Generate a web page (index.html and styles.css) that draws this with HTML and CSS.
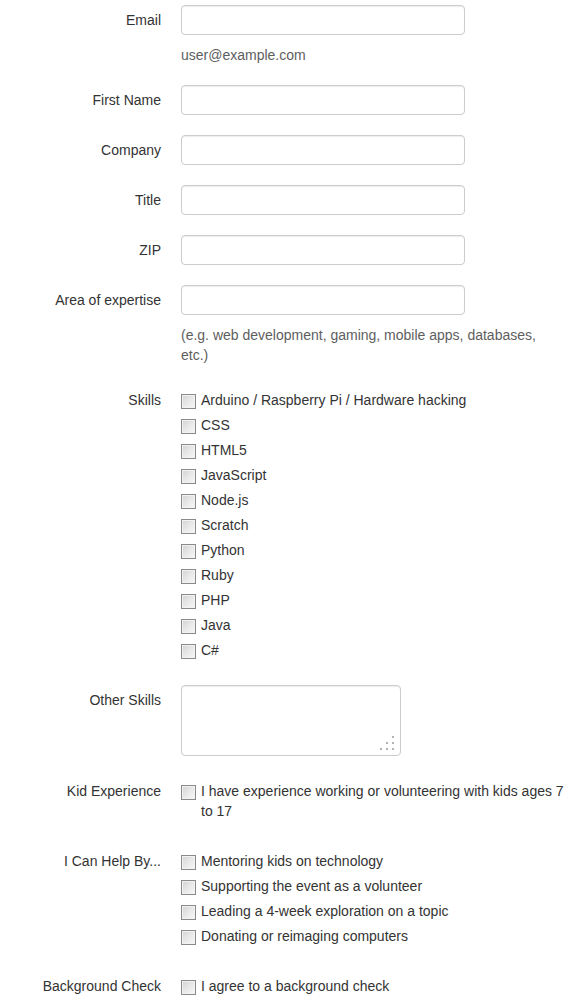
FILE: index.html
```html
<!DOCTYPE html>
<html lang="en">
<head>
<meta charset="utf-8">
<title>Volunteer form</title>
<link rel="stylesheet" href="styles.css">
</head>
<body>
<form class="form">
  <div class="row">
    <label class="label">Email</label>
    <div class="controls">
      <input class="input" type="text">
      <p class="help">user@example.com</p>
    </div>
  </div>
  <div class="row">
    <label class="label">First Name</label>
    <div class="controls"><input class="input" type="text"></div>
  </div>
  <div class="row">
    <label class="label">Company</label>
    <div class="controls"><input class="input" type="text"></div>
  </div>
  <div class="row">
    <label class="label">Title</label>
    <div class="controls"><input class="input" type="text"></div>
  </div>
  <div class="row">
    <label class="label">ZIP</label>
    <div class="controls"><input class="input" type="text"></div>
  </div>
  <div class="row">
    <label class="label">Area of expertise</label>
    <div class="controls">
      <input class="input" type="text">
      <p class="help">(e.g. web development, gaming, mobile apps, databases, etc.)</p>
    </div>
  </div>
  <div class="row">
    <label class="label">Skills</label>
    <div class="controls checks">
      <label class="check"><input type="checkbox" class="cb"><span>Arduino / Raspberry Pi / Hardware hacking</span></label>
      <label class="check"><input type="checkbox" class="cb"><span>CSS</span></label>
      <label class="check"><input type="checkbox" class="cb"><span>HTML5</span></label>
      <label class="check"><input type="checkbox" class="cb"><span>JavaScript</span></label>
      <label class="check"><input type="checkbox" class="cb"><span>Node.js</span></label>
      <label class="check"><input type="checkbox" class="cb"><span>Scratch</span></label>
      <label class="check"><input type="checkbox" class="cb"><span>Python</span></label>
      <label class="check"><input type="checkbox" class="cb"><span>Ruby</span></label>
      <label class="check"><input type="checkbox" class="cb"><span>PHP</span></label>
      <label class="check"><input type="checkbox" class="cb"><span>Java</span></label>
      <label class="check"><input type="checkbox" class="cb"><span>C#</span></label>
    </div>
  </div>
  <div class="row">
    <label class="label">Other Skills</label>
    <div class="controls">
      <div class="ta-wrap">
        <textarea class="textarea"></textarea>
        <svg class="grip" width="14" height="14" viewBox="0 0 14 14" aria-hidden="true">
          <rect x="12" y="0" width="2" height="2" fill="#b3b3b3"/>
          <rect x="6" y="6" width="2" height="2" fill="#b3b3b3"/>
          <rect x="12" y="6" width="2" height="2" fill="#b3b3b3"/>
          <rect x="0" y="12" width="2" height="2" fill="#b3b3b3"/>
          <rect x="6" y="12" width="2" height="2" fill="#b3b3b3"/>
          <rect x="12" y="12" width="2" height="2" fill="#b3b3b3"/>
        </svg>
      </div>
    </div>
  </div>
  <div class="row">
    <label class="label">Kid Experience</label>
    <div class="controls checks">
      <label class="check"><input type="checkbox" class="cb"><span>I have experience working or volunteering with kids ages 7 to 17</span></label>
    </div>
  </div>
  <div class="row">
    <label class="label">I Can Help By...</label>
    <div class="controls checks">
      <label class="check"><input type="checkbox" class="cb"><span>Mentoring kids on technology</span></label>
      <label class="check"><input type="checkbox" class="cb"><span>Supporting the event as a volunteer</span></label>
      <label class="check"><input type="checkbox" class="cb"><span>Leading a 4-week exploration on a topic</span></label>
      <label class="check"><input type="checkbox" class="cb"><span>Donating or reimaging computers</span></label>
    </div>
  </div>
  <div class="row">
    <label class="label">Background Check</label>
    <div class="controls checks">
      <label class="check"><input type="checkbox" class="cb"><span>I agree to a background check</span></label>
    </div>
  </div>
</form>
</body>
</html>
```

FILE: styles.css
```css
html, body {
  margin: 0;
  padding: 0;
  background: #fff;
}

body {
  font-family: "Liberation Sans", Arial, sans-serif;
  font-size: 14px;
  line-height: 20px;
  color: #333;
}

.form {
  padding-top: 5px;
}

.row {
  display: flex;
  gap: 20px;
  margin-bottom: 20px;
}

.label {
  flex: 0 0 161px;
  text-align: right;
  padding-top: 5px;
  line-height: 20px;
}

.controls {
  flex: 1 1 auto;
  min-width: 0;
  padding-right: 10px;
}

.input {
  display: block;
  box-sizing: border-box;
  width: 284px;
  height: 30px;
  margin: 0;
  padding: 4px 8px;
  border: 1px solid #ccc;
  border-radius: 4px;
  box-shadow: inset 0 1px 1px rgba(0, 0, 0, 0.075);
  font: inherit;
  color: #555;
  background: #fff;
}

.help {
  margin: 10px 0 0;
  color: #5e5e5e;
}

.checks {
  display: flex;
  flex-direction: column;
  gap: 5px;
  padding-top: 5px;
  padding-bottom: 5px;
}

.check {
  display: flex;
  align-items: flex-start;
  gap: 5px;
  line-height: 20px;
}

.cb {
  appearance: none;
  -webkit-appearance: none;
  flex: 0 0 auto;
  box-sizing: border-box;
  width: 15px;
  height: 15px;
  margin: 4px 0 0;
  border: 1px solid #8a8a8a;
  background: linear-gradient(135deg, #d2d2d2 0%, #e8e8e8 50%, #f8f8f8 100%);
  box-shadow: inset 0 0 0 1px #f2f2f2;
}

.ta-wrap {
  position: relative;
  width: 220px;
  height: 71px;
}

.textarea {
  display: block;
  box-sizing: border-box;
  width: 220px;
  height: 71px;
  margin: 0;
  padding: 4px 8px;
  border: 1px solid #ccc;
  border-radius: 4px;
  box-shadow: inset 0 1px 1px rgba(0, 0, 0, 0.075);
  resize: none;
  font: inherit;
  background: #fff;
}

.grip {
  position: absolute;
  right: 7px;
  bottom: 6px;
}
```
